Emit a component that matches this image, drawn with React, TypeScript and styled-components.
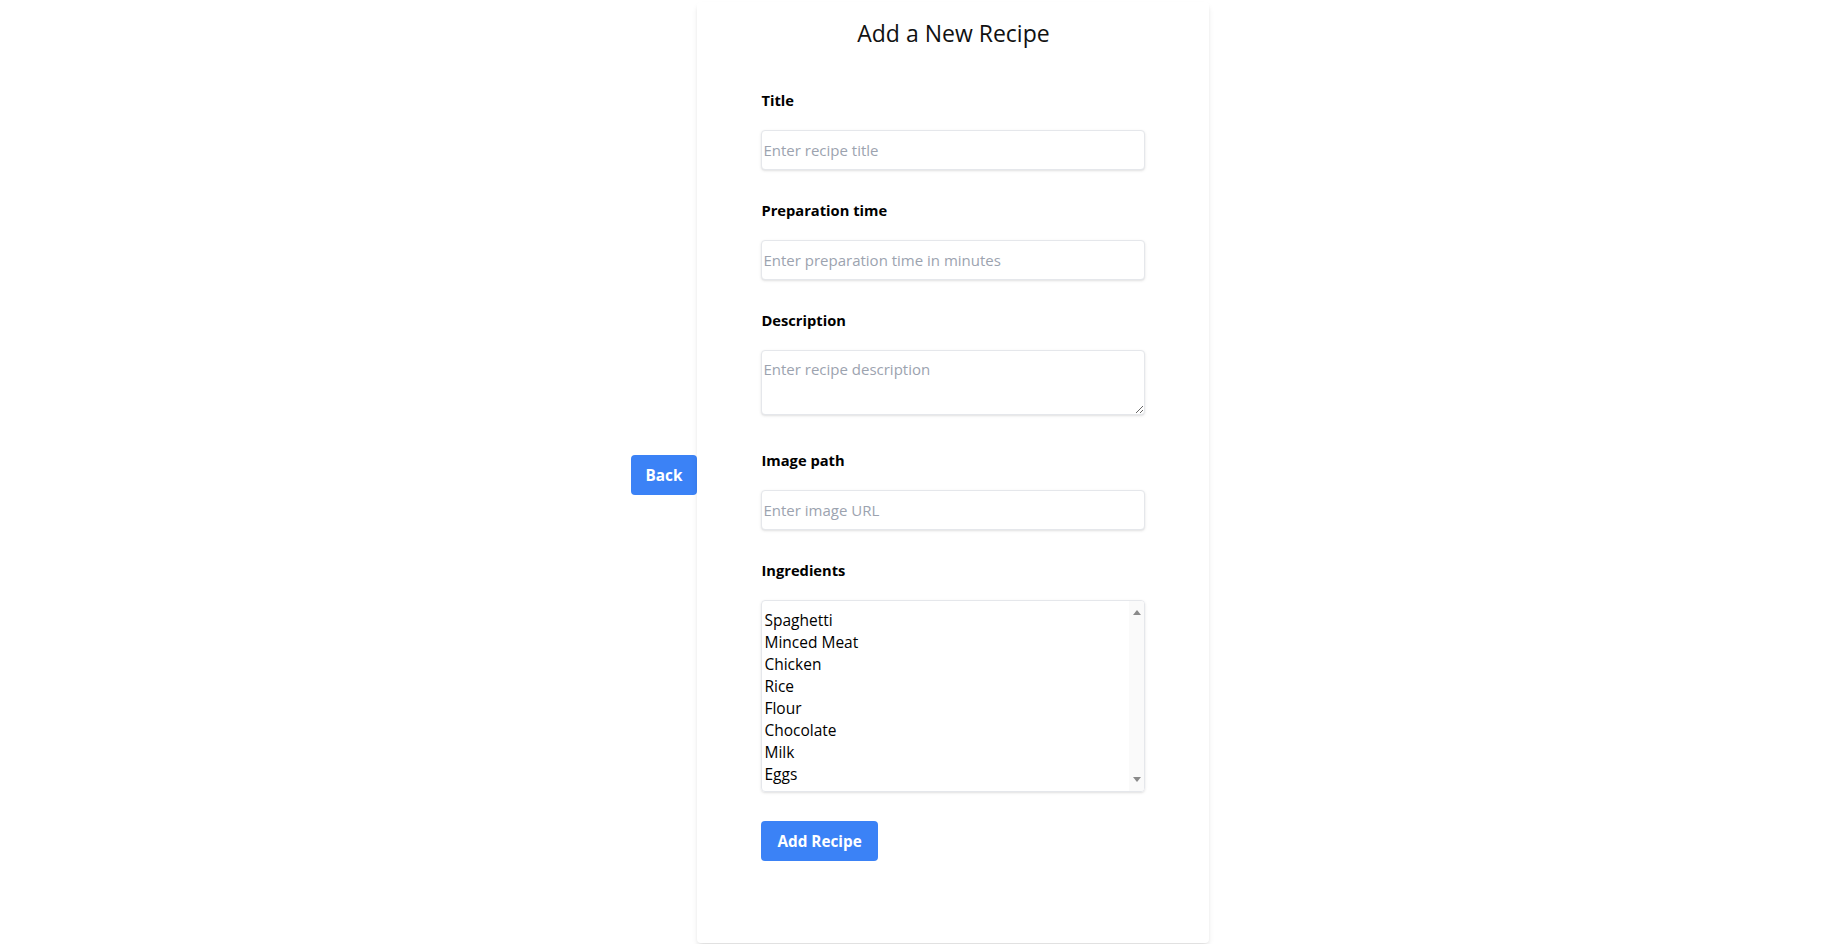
import React from "react";
import styled, { createGlobalStyle } from "styled-components";

const GlobalStyle = createGlobalStyle`
  html, body {
    margin: 0;
    padding: 0;
    background: #ffffff;
    font-family: "Segoe UI", "Open Sans", sans-serif;
    color: #000000;
  }
  * { box-sizing: border-box; }
`;

const Page = styled.div`
  display: flex;
  justify-content: center;
  align-items: center;
  min-height: 100vh;
`;

const BlueButton = styled.button`
  background: #3b82f6;
  color: #ffffff;
  border: none;
  border-radius: 4px;
  font-family: "Segoe UI", "Open Sans", sans-serif;
  font-weight: 700;
  font-size: 15.3px;
  line-height: 24px;
  padding: 8px 16px;
  cursor: pointer;
`;

const BackButton = styled(BlueButton)`
  margin-top: 6px;
  padding: 8px 15px;
`;

const Card = styled.div`
  width: 512px;
  background: #ffffff;
  border-radius: 4px;
  box-shadow: 0 4px 6px -1px rgba(0, 0, 0, 0.1), 0 2px 4px -2px rgba(0, 0, 0, 0.1);
  padding: 15px 64px 82px;
`;

const Heading = styled.h2`
  margin: 0 0 41px;
  text-align: center;
  font-size: 23px;
  line-height: 32px;
  font-weight: 400;
  color: #111111;
`;

const Form = styled.form`
  display: flex;
  flex-direction: column;
`;

const Field = styled.div<{ $gap: number }>`
  display: flex;
  flex-direction: column;
  margin-bottom: ${(p) => p.$gap}px;
`;

const Label = styled.label`
  display: block;
  font-size: 14.7px;
  line-height: 20px;
  font-weight: 700;
  margin-bottom: 20px;
`;

const fieldBase = `
  width: 100%;
  border: 1px solid #e5e7eb;
  border-radius: 4px;
  box-shadow: 0 1px 3px 0 rgba(0, 0, 0, 0.1), 0 1px 2px -1px rgba(0, 0, 0, 0.1);
  font-family: "Segoe UI", "Open Sans", sans-serif;
  font-size: 15px;
  color: #374151;
  background: #ffffff;
  outline: none;
  &::placeholder { color: #9ca3af; }
`;

const TextInput = styled.input`
  ${fieldBase}
  display: block;
  height: 40px;
  padding: 0 1px;
`;

const TextArea = styled.textarea`
  ${fieldBase}
  display: block;
  height: 65px;
  padding: 8px 1px;
  line-height: 20px;
`;

const ListBox = styled.div`
  display: flex;
  height: 192px;
  border: 1px solid #e5e7eb;
  border-radius: 4px;
  box-shadow: 0 1px 3px 0 rgba(0, 0, 0, 0.1), 0 1px 2px -1px rgba(0, 0, 0, 0.1);
  overflow: hidden;
`;

const OptionList = styled.ul`
  flex: 1;
  list-style: none;
  margin: 0;
  padding: 8px 0;
`;

const OptionItem = styled.li`
  font-size: 15.5px;
  line-height: 22px;
  padding: 0 2px;
  color: #000000;
`;

const ScrollRail = styled.div`
  width: 15px;
  background: #fafafa;
  display: flex;
  flex-direction: column;
  justify-content: space-between;
  align-items: center;
  padding: 9px 0;
`;

const Arrow = styled.span<{ $down?: boolean }>`
  width: 0;
  height: 0;
  border-left: 4px solid transparent;
  border-right: 4px solid transparent;
  ${(p) =>
    p.$down
      ? "border-top: 5px solid #8a8a8a;"
      : "border-bottom: 5px solid #8a8a8a;"}
`;

const SubmitRow = styled.div`
  display: flex;
`;

const ingredients = [
  "Spaghetti",
  "Minced Meat",
  "Chicken",
  "Rice",
  "Flour",
  "Chocolate",
  "Milk",
  "Eggs",
];

export default function App() {
  return (
    <>
      <GlobalStyle />
      <Page>
        <BackButton type="button">Back</BackButton>
        <Card>
          <Heading>Add a New Recipe</Heading>
          <Form onSubmit={(e) => e.preventDefault()}>
            <Field $gap={30}>
              <Label htmlFor="title">Title</Label>
              <TextInput id="title" placeholder="Enter recipe title" />
            </Field>
            <Field $gap={30}>
              <Label htmlFor="prep">Preparation time</Label>
              <TextInput id="prep" placeholder="Enter preparation time in minutes" />
            </Field>
            <Field $gap={35}>
              <Label htmlFor="desc">Description</Label>
              <TextArea id="desc" placeholder="Enter recipe description" />
            </Field>
            <Field $gap={30}>
              <Label htmlFor="img">Image path</Label>
              <TextInput id="img" placeholder="Enter image URL" />
            </Field>
            <Field $gap={29}>
              <Label>Ingredients</Label>
              <ListBox role="listbox" aria-multiselectable="true">
                <OptionList>
                  {ingredients.map((i) => (
                    <OptionItem key={i} role="option">
                      {i}
                    </OptionItem>
                  ))}
                </OptionList>
                <ScrollRail>
                  <Arrow />
                  <Arrow $down />
                </ScrollRail>
              </ListBox>
            </Field>
            <SubmitRow>
              <BlueButton type="submit">Add Recipe</BlueButton>
            </SubmitRow>
          </Form>
        </Card>
      </Page>
    </>
  );
}
